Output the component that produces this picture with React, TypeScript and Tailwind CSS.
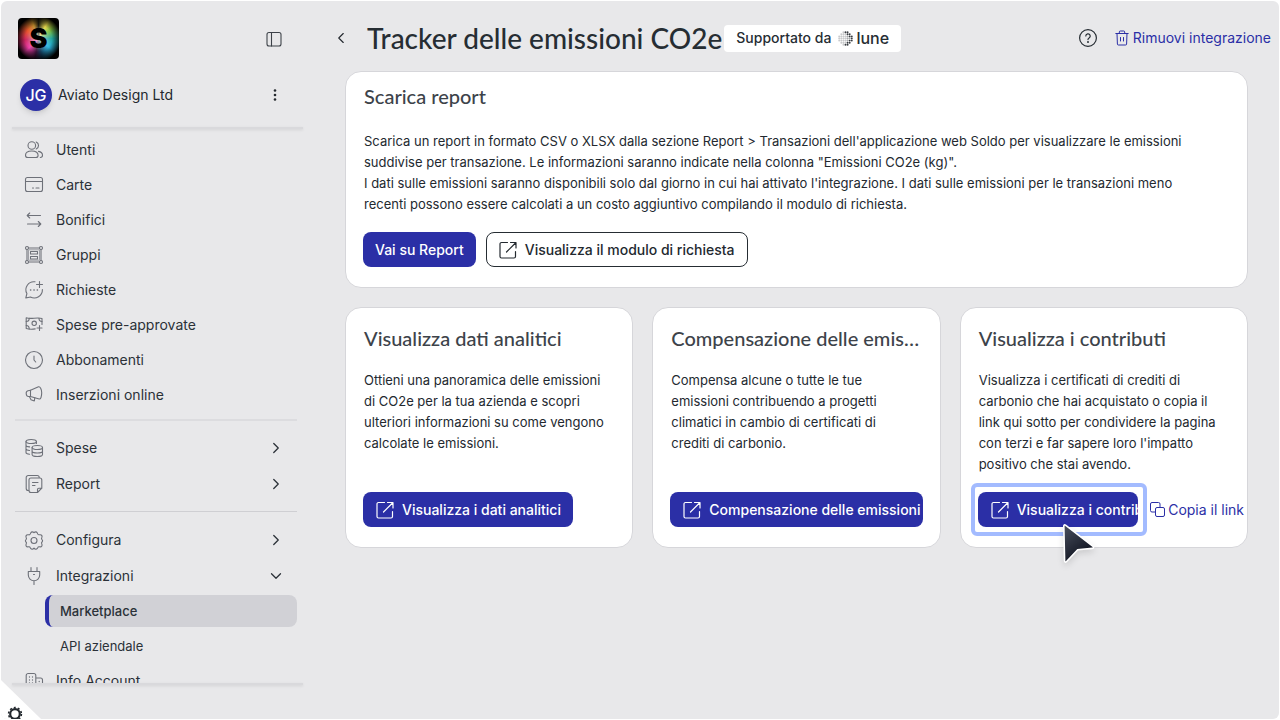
import React from "react";
import { ChevronDown, ChevronLeft, ChevronRight } from "lucide-react";

interface IconProps {
  children: React.ReactNode;
  className?: string;
}

const Icon = ({ children, className = "text-[#6e7179]" }: IconProps) => (
  <svg
    width="18"
    height="18"
    viewBox="0 0 18 18"
    fill="none"
    stroke="currentColor"
    strokeWidth="1.1"
    strokeLinecap="round"
    strokeLinejoin="round"
    aria-hidden="true"
    className={`shrink-0 overflow-visible ${className}`}
  >
    {children}
  </svg>
);

const UsersIcon = () => (
  <Icon>
    <circle cx="6.8" cy="4.5" r="3.8" />
    <path d="M11.2 1a3.8 3.8 0 0 1 0 7" />
    <path d="M.5 14.2c0-2.6 2.7-4.2 6.3-4.2s6.3 1.6 6.3 4.2c0 1.6-1 2.3-2.3 2.3h-8C1.5 16.5.5 15.8.5 14.2z" />
    <path d="M13.5 10.4c2.4.4 4 1.9 4 3.9 0 1.5-.9 2.2-2.2 2.2" />
  </Icon>
);

const CardIcon = () => (
  <Icon>
    <rect x=".5" y="1.5" width="17" height="14" rx="2" />
    <path d="M.5 5.5h17M7.5 12h1M11 12h3" />
  </Icon>
);

const TransferIcon = () => (
  <Icon>
    <path d="M15.5 4.5H2.5M4.7 2 2.2 4.5 4.7 7M2.5 13h13M13.3 10.5l2.5 2.5-2.5 2.5" />
  </Icon>
);

const GroupIcon = () => (
  <Icon>
    <circle cx="2" cy="2" r="1.5" />
    <circle cx="16" cy="2" r="1.5" />
    <circle cx="2" cy="16" r="1.5" />
    <circle cx="16" cy="16" r="1.5" />
    <path d="M3.5 2h11M3.5 16h11M2 3.5v11M16 3.5v11" />
    <path d="M4 3.8h10M4 14.2h10M3.5 4.5v9M14.5 4.5v9" strokeWidth=".6" />
    <rect x="5.5" y="5.5" width="7" height="2.5" />
    <rect x="5.5" y="10.5" width="7" height="2.5" />
  </Icon>
);

const RequestIcon = () => (
  <Icon>
    <path d="M10 .8A8 8 0 0 0 1.9 12.6L.8 17l4.6-1A8.2 8.2 0 0 0 17.4 8.5" />
    <path d="M14.5.5v6M11.5 3.5h6" />
    <path d="M5.5 9h.3M8.9 9h.3M12.2 9h.3" strokeWidth="1.4" />
  </Icon>
);

const CashIcon = () => (
  <Icon>
    <path d="M17 8.5v-6S14.5 1.6 9 2.2C4 2.7 1.2 1.8 1.2 1.8v10.7s3.8 1.2 9 .4" />
    <circle cx="9.2" cy="7.3" r="2.2" />
    <path d="M1.2 5.5c2 0 3-1 3-3.3M1.2 9.5c2 0 3 1.2 3 3.5M17 5.5c-2 0-3-1-3-3.2M14.5 9.5v5M12 12h5" />
  </Icon>
);

const ClockIcon = () => (
  <Icon>
    <circle cx="9" cy="9" r="8.5" />
    <path d="M9 5v4l1.7 2" />
  </Icon>
);

const MegaphoneIcon = () => (
  <Icon>
    <path d="M5.5 4.2 13.5.8c1.5-.5 3.2 2.2 3.2 6s-1 6.5-2.5 6.2L5.500 10.500z" />
    <path d="M5.500 4.200 3 4.800c-1.300.3-2 1.300-1.800 3 .2 1.800 1 2.700 2.300 2.700h2M4.500 10.700l1.500 3 3.300 1.200.5-3" />
  </Icon>
);

const CoinsIcon = () => (
  <Icon>
    <ellipse cx="6.2" cy="2.5" rx="5.2" ry="2" />
    <path d="M1 2.5v11c0 .8 1.3 1.6 3.6 1.8M1 6.2c0 .8 1.3 1.5 3.6 1.7M1 9.8c0 .8 1.3 1.5 3.6 1.7M11.4 2.5v2" />
    <ellipse cx="12.3" cy="8.5" rx="5.2" ry="2" />
    <path d="M7.1 8.5v7c0 1 2.3 2 5.2 2s5.2-1 5.2-2v-7M7.1 12c0 1 2.3 2 5.2 2s5.2-1 5.2-2" />
  </Icon>
);

const ReportIcon = () => (
  <Icon>
    <path d="M3.7 15.5h-.5a2 2 0 0 1-2-2V2.5a2 2 0 0 1 2-2h9a2 2 0 0 1 2 2" />
    <path d="M12.5 17.5H6a2 2 0 0 1-2-2V5a2 2 0 0 1 2-2h8.800a2 2 0 0 1 2 2v8.200zM12.500 17.500v-3a1.300 1.300 0 0 1 1.300-1.300h3" />
    <path d="M7.5 7.5h5.5M7.5 10.5h2.5" />
  </Icon>
);

const GearIcon = () => (
  <Icon>
    <path d="M5.7 1.9C6.5.4 8 .6 9 1.7c1-1.1 2.5-1.3 3.3.2l.4 1c.3.7.9 1 1.6.9l.8-.1c1.700-.1 2.400 1.600 1.700 2.900-.6 1-.3 1.500.2 2 .8.7.8 1.700 0 2.400-.5.5-.8 1-.2 2 .7 1.300 0 3-1.700 2.900l-.8-.1c-.7-.1-1.300.2-1.600.9l-.4.7c-.8 1.200-2.300 1-3.300-.3-1 1.300-2.500 1.500-3.300.3l-.4-.7c-.3-.7-.9-1-1.600-.9l-.8.1C1.200 16 .5 14.300 1.200 13c.6-1 .3-1.500-.2-2-.8-.7-.8-1.700 0-2.400.5-.5.8-1 .2-2C.5 5.300 1.200 3.600 2.900 3.700l.8.1c.7.1 1.300-.2 1.600-.9z" />
    <circle cx="9" cy="9.5" r="3" />
  </Icon>
);

const PlugIcon = () => (
  <Icon>
    <path d="M6 .5v4M12 .5v4M3.3 4.5h11.4V8a5.700 5.700 0 0 1-11.400 0zM9 13.800v3.700M8.500 7.500h1" />
  </Icon>
);

const BuildingIcon = () => (
  <Icon>
    <path d="M1.2 17.5v-14a2 2 0 0 1 2-2h5.6a2 2 0 0 1 2 2v14zM10.8 6h4.7a2 2 0 0 1 2 2v9.5h-6.7" />
    <path
      d="M4.5 5v.1M7.5 5v.1M4.5 8v.1M7.5 8v.1M4.5 11v.1M7.5 11v.1M14.2 9.5v.1M14.2 12.5v.1"
      strokeWidth="1.3"
    />
  </Icon>
);

const OpenIcon = () => (
  <Icon className="">
    <path
      d="M8.5 1.5h-6A1.500 1.500 0 0 0 1 3v12.500A1.500 1.500 0 0 0 2.500 17H15a1.500 1.500 0 0 0 1.500-1.500v-5M11.500 1.500H17V7M16.500 2l-9 9"
      strokeWidth="1.2"
    />
  </Icon>
);

const mainLinks = [
  { label: "Utenti", icon: <UsersIcon /> },
  { label: "Carte", icon: <CardIcon /> },
  { label: "Bonifici", icon: <TransferIcon /> },
  { label: "Gruppi", icon: <GroupIcon /> },
  { label: "Richieste", icon: <RequestIcon /> },
  { label: "Spese pre-approvate", icon: <CashIcon /> },
  { label: "Abbonamenti", icon: <ClockIcon /> },
  { label: "Inserzioni online", icon: <MegaphoneIcon /> },
];

interface NavGroupProps {
  label: string;
  icon: React.ReactNode;
  open?: boolean;
}

const NavGroup = ({ label, icon, open }: NavGroupProps) => (
  <button
    type="button"
    aria-expanded={!!open}
    className="flex h-9 w-full items-center gap-[13px] pl-[10px] pr-3 text-left"
  >
    {icon}
    <span className="flex-1">{label}</span>
    {open ? (
      <ChevronDown size={18} strokeWidth={1.7} />
    ) : (
      <ChevronRight size={18} strokeWidth={1.7} />
    )}
  </button>
);

const Sidebar = () => (
  <aside className="flex w-[302px] shrink-0 flex-col pl-[11px]">
    <div className="flex items-center justify-between pl-[6px] pr-[19px] pt-[17px]">
      <a
        href="#home"
        aria-label="Soldo"
        className="flex size-[41px] items-center justify-center rounded bg-[radial-gradient(circle,rgba(255,255,255,0.65)_0%,rgba(255,255,255,0.1)_38%,rgba(0,0,0,0)_46%,#000_78%),conic-gradient(#1a1a10,#e3d34a_30deg,#7fc043_55deg,#22a39a_90deg,#2cb5e0_130deg,#123a58_170deg,#3a1238_190deg,#ee3fa8_225deg,#c9245c_265deg,#e8552c_305deg,#b8862a_340deg,#1a1a10)] text-[27px] font-black leading-none text-black"
      >
        S
      </a>
      <button type="button" aria-label="Comprimi menu" className="p-px">
        <Icon className="text-[#3d4249]">
          <rect x="2" y="2.5" width="14" height="13.5" rx="2" />
          <path d="M6.5 2.5V16" />
        </Icon>
      </button>
    </div>
    <div className="mt-5 flex items-center pl-2 pr-[18px]">
      <span className="flex size-8 items-center justify-center rounded-full bg-[#2b2fa6] text-base font-medium text-white shadow-md">
        JG
      </span>
      <span className="ml-[6px] flex-1 text-sm text-[#23282e]">
        Aviato Design Ltd
      </span>
      <button type="button" aria-label="Altre opzioni">
        <svg width="20" height="20" fill="#23282e" aria-hidden="true">
          <circle cx="10" cy="5.5" r="1.3" />
          <circle cx="10" cy="10" r="1.3" />
          <circle cx="10" cy="14.5" r="1.3" />
        </svg>
      </button>
    </div>
    <div className="mt-4 h-[2px] shrink-0 bg-[#d9d9dc] shadow-sm" />
    <nav className="min-h-0 flex-1 overflow-hidden pl-[3px] pr-[6px] pt-[3px] text-sm text-[#2b3138]">
      <ul>
        {mainLinks.map((link) => (
          <li key={link.label}>
            <a href="#" className="flex h-[35px] items-center gap-[13px] pl-[10px]">
              {link.icon}
              {link.label}
            </a>
          </li>
        ))}
      </ul>
      <hr className="mb-[9px] mt-[7px] border-t-2 border-[#dcdcdf]" />
      <NavGroup label="Spese" icon={<CoinsIcon />} />
      <NavGroup label="Report" icon={<ReportIcon />} />
      <hr className="mb-[10px] mt-[9px] border-[#cfcfd3]" />
      <NavGroup label="Configura" icon={<GearIcon />} />
      <NavGroup label="Integrazioni" icon={<PlugIcon />} open />
      <div className="ml-[30px] mt-px text-[13px]">
        <a
          href="#"
          aria-current="page"
          className="flex h-8 items-center rounded-lg border-l-4 border-[#2b2fa6] bg-[#d1d1d6] pl-[11px] font-medium"
        >
          Marketplace
        </a>
        <a href="#" className="mt-[3px] flex h-8 items-center pl-[15px]">
          API aziendale
        </a>
      </div>
      <a href="#" className="mt-px flex h-9 items-center gap-[13px] pl-[10px]">
        <BuildingIcon />
        Info Account
      </a>
    </nav>
    <div className="mb-[34px] h-[2px] shrink-0 bg-[#d9d9dc] shadow-sm" />
  </aside>
);

// shaded globe made of a grid of dots, darker towards the right edge
const LuneMark = () => {
  const dots: { x: number; y: number; o: number }[] = [];
  for (let x = -3; x <= 3; x++) {
    for (let y = -3; y <= 3; y++) {
      if (x * x + y * y > 10) continue;
      dots.push({ x, y, o: x + Math.abs(y) > 2 ? 0.9 : x > 0 ? 0.4 : 0.25 });
    }
  }
  return (
    <svg width="15" height="15" viewBox="0 0 15 15" fill="#23282e" aria-hidden="true">
      {dots.map((d) => (
        <circle
          key={`${d.x},${d.y}`}
          cx={7.5 + d.x * 2.1}
          cy={7.5 + d.y * 2.1}
          r="0.95"
          opacity={d.o}
        />
      ))}
    </svg>
  );
};

const Header = () => (
  <header className="flex items-center pr-2 pt-[17px]">
    <button type="button" aria-label="Indietro" className="-ml-[13px] mr-[17px] text-[#23282e]">
      <ChevronLeft size={18} strokeWidth={1.5} />
    </button>
    <h1 className="whitespace-nowrap font-['Lato',sans-serif] text-[28px] font-medium leading-10 text-[#262d33]">
      Tracker delle emissioni CO2e
    </h1>
    <div className="ml-[2px] flex h-[27px] items-center whitespace-nowrap rounded bg-white px-3 text-sm font-medium text-[#262d33]">
      Supportato da
      <span className="ml-[7px] flex items-center gap-[3px]">
        <LuneMark />
        <span className="text-base leading-5">lune</span>
      </span>
    </div>
    <div className="ml-auto flex items-center gap-[18px]">
      <button type="button" aria-label="Aiuto" className="text-[#262d33]">
        <Icon className="">
          <circle cx="9" cy="9" r="8.4" strokeWidth="1.2" />
          <path
            d="M6.8 7a2.2 2.2 0 1 1 3.3 1.9c-.8.5-1.1.9-1.1 1.700"
            strokeWidth="1.2"
          />
          <circle cx="9" cy="13" r=".4" fill="currentColor" />
        </Icon>
      </button>
      <button
        type="button"
        className="flex items-center gap-1 whitespace-nowrap text-sm text-[#2b2fa6]"
      >
        <svg width="14" height="16" viewBox="0 0 14 16" fill="none" stroke="currentColor" strokeLinecap="round" strokeLinejoin="round" aria-hidden="true">
          <path d="M.8 3.5h12.4M2 3.5l.4 10.5a1 1 0 0 0 1 1h7.2a1 1 0 0 0 1-1L12 3.5M4.3 3.5V2a1 1 0 0 1 1-1h3.4a1 1 0 0 1 1 1v1.5M5.5 7.5V11M8.5 7.5V11" />
        </svg>
        Rimuovi integrazione
      </button>
    </div>
  </header>
);

interface CardProps {
  title: string;
  children: React.ReactNode;
  action: React.ReactNode;
}

const Card = ({ title, children, action }: CardProps) => (
  <section className="flex min-w-0 flex-col rounded-2xl border border-[#d6d6da] bg-white px-[17px] pb-5 pt-4">
    <h2 className="truncate pl-px font-['Lato',sans-serif] text-xl font-medium leading-7 text-[#3d434a]">
      {title}
    </h2>
    <p className="mb-[17px] mt-[18px] flex-1 pl-px pr-2 text-[13px] leading-[21px]">
      {children}
    </p>
    {action}
  </section>
);

const Cursor = () => (
  <svg
    width="34"
    height="42"
    viewBox="0 0 34 42"
    aria-hidden="true"
    className="absolute left-[84px] top-[31px] z-10 drop-shadow-md"
  >
    <defs>
      <linearGradient id="cursor" x1="0" y1="0" x2="0.6" y2="1">
        <stop offset="0" stopColor="#4a505e" />
        <stop offset="1" stopColor="#0b0f1c" />
      </linearGradient>
    </defs>
    <path
      d="M3.5 2.2 31 23.3c1 .8.6 2-.7 2.1l-14.6 1.3L4.6 38.5c-.9 1-2 .6-2-.7L1.800 3c0-1.100.8-1.500 1.700-.8z"
      fill="url(#cursor)"
      stroke="#fff"
      strokeWidth="1.6"
    />
  </svg>
);

const Content = () => (
  <div className="mr-[31px] mt-[13px] pb-6 text-[#23292f]">
    <section className="rounded-2xl border border-[#d6d6da] bg-white px-[17px] pb-5 pt-[10px]">
      <h2 className="pl-px font-['Lato',sans-serif] text-xl font-medium leading-7 text-[#3d434a]">
        Scarica report
      </h2>
      <p className="mt-[21px] pl-px pr-6 text-[13px] leading-[21px]">
        Scarica un report in formato CSV o XLSX dalla sezione Report &gt;
        Transazioni dell'applicazione web Soldo per visualizzare le emissioni
        suddivise per transazione. Le informazioni saranno indicate nella
        colonna "Emissioni CO2e (kg)".
        <br />I dati sulle emissioni saranno disponibili solo dal giorno in cui
        hai attivato l'integrazione. I dati sulle emissioni per le transazioni
        meno recenti possono essere calcolati a un costo aggiuntivo compilando
        il modulo di richiesta.
      </p>
      <div className="mt-[17px] flex gap-[10px] text-sm font-medium">
        <button type="button" className="h-[35px] rounded-lg bg-[#2b2fa6] px-3 text-white">
          Vai su Report
        </button>
        <button
          type="button"
          className="flex h-[35px] items-center gap-2 rounded-lg border border-[#262d33] px-3"
        >
          <OpenIcon />
          Visualizza il modulo di richiesta
        </button>
      </div>
    </section>
    <div className="mt-[19px] grid grid-cols-3 gap-[19px]">
      <Card
        title="Visualizza dati analitici"
        action={
          <button
            type="button"
            className="flex h-[35px] max-w-full items-center gap-2 self-start overflow-hidden whitespace-nowrap rounded-lg bg-[#2b2fa6] pl-[13px] pr-3 text-sm font-medium text-white"
          >
            <OpenIcon />
            Visualizza i dati analitici
          </button>
        }
      >
        Ottieni una panoramica delle emissioni di CO2e per la tua azienda e
        scopri ulteriori informazioni su come vengono calcolate le emissioni.
      </Card>
      <Card
        title="Compensazione delle emissioni"
        action={
          <button
            type="button"
            className="flex h-[35px] max-w-full items-center gap-2 self-start overflow-hidden whitespace-nowrap rounded-lg bg-[#2b2fa6] pl-[13px] pr-3 text-sm font-medium text-white"
          >
            <OpenIcon />
            Compensazione delle emissioni
          </button>
        }
      >
        Compensa alcune o tutte le tue emissioni contribuendo a progetti
        climatici in cambio di certificati di crediti di carbonio.
      </Card>
      <Card
        title="Visualizza i contributi"
        action={
          <div className="relative -mr-[14px] flex items-center gap-3 text-sm">
            <div className="relative min-w-0 flex-1">
              <button
                type="button"
                className="flex h-[35px] w-full items-center gap-2 overflow-hidden whitespace-nowrap rounded-lg bg-[#2b2fa6] px-[13px] font-medium text-white"
              >
                <OpenIcon />
                Visualizza i contributi
              </button>
              <span className="pointer-events-none absolute -inset-y-[9px] -left-[7px] -right-[9px] rounded-md border-4 border-[#a3bbff]" />
            </div>
            <button
              type="button"
              className="flex shrink-0 items-center gap-[3px] whitespace-nowrap text-[#2b2fa6]"
            >
              <svg width="15" height="15" viewBox="0 0 15 15" fill="none" stroke="currentColor" aria-hidden="true">
                <rect x="5.5" y="5.5" width="9" height="9" rx="1.5" />
                <path d="M5.5 10H2A1.500 1.500 0 0 1 .5 8.500V2A1.500 1.500 0 0 1 2 .5h6.500A1.500 1.500 0 0 1 10 2v3.500" />
              </svg>
              Copia il link
            </button>
            <Cursor />
          </div>
        }
      >
        Visualizza i certificati di crediti di carbonio che hai acquistato o
        copia il link qui sotto per condividere la pagina con terzi e far sapere
        loro l'impatto positivo che stai avendo.
      </Card>
    </div>
  </div>
);

const CornerSettings = () => (
  <button
    type="button"
    aria-label="Impostazioni cookie"
    className="absolute bottom-0 left-0 h-[39px] w-10 overflow-hidden bg-white [clip-path:polygon(0_0,100%_100%,0_100%)]"
  >
    <svg width="40" height="39" viewBox="0 0 40 39" fill="none" stroke="#23282e" aria-hidden="true">
      <circle cx="14" cy="34" r="4.8" strokeWidth="2.2" />
      <circle cx="14" cy="34" r="6.4" strokeWidth="1.6" strokeDasharray="2 2.021" />
    </svg>
  </button>
);

export default function App() {
  return (
    <div className="h-screen bg-white p-px font-['Inter',sans-serif]">
      <div className="relative flex h-full overflow-hidden rounded-md bg-[#e8e8ea]">
        <Sidebar />
        <main className="min-w-0 flex-1 pl-[42px]">
          <Header />
          <Content />
        </main>
        <CornerSettings />
      </div>
    </div>
  );
}
